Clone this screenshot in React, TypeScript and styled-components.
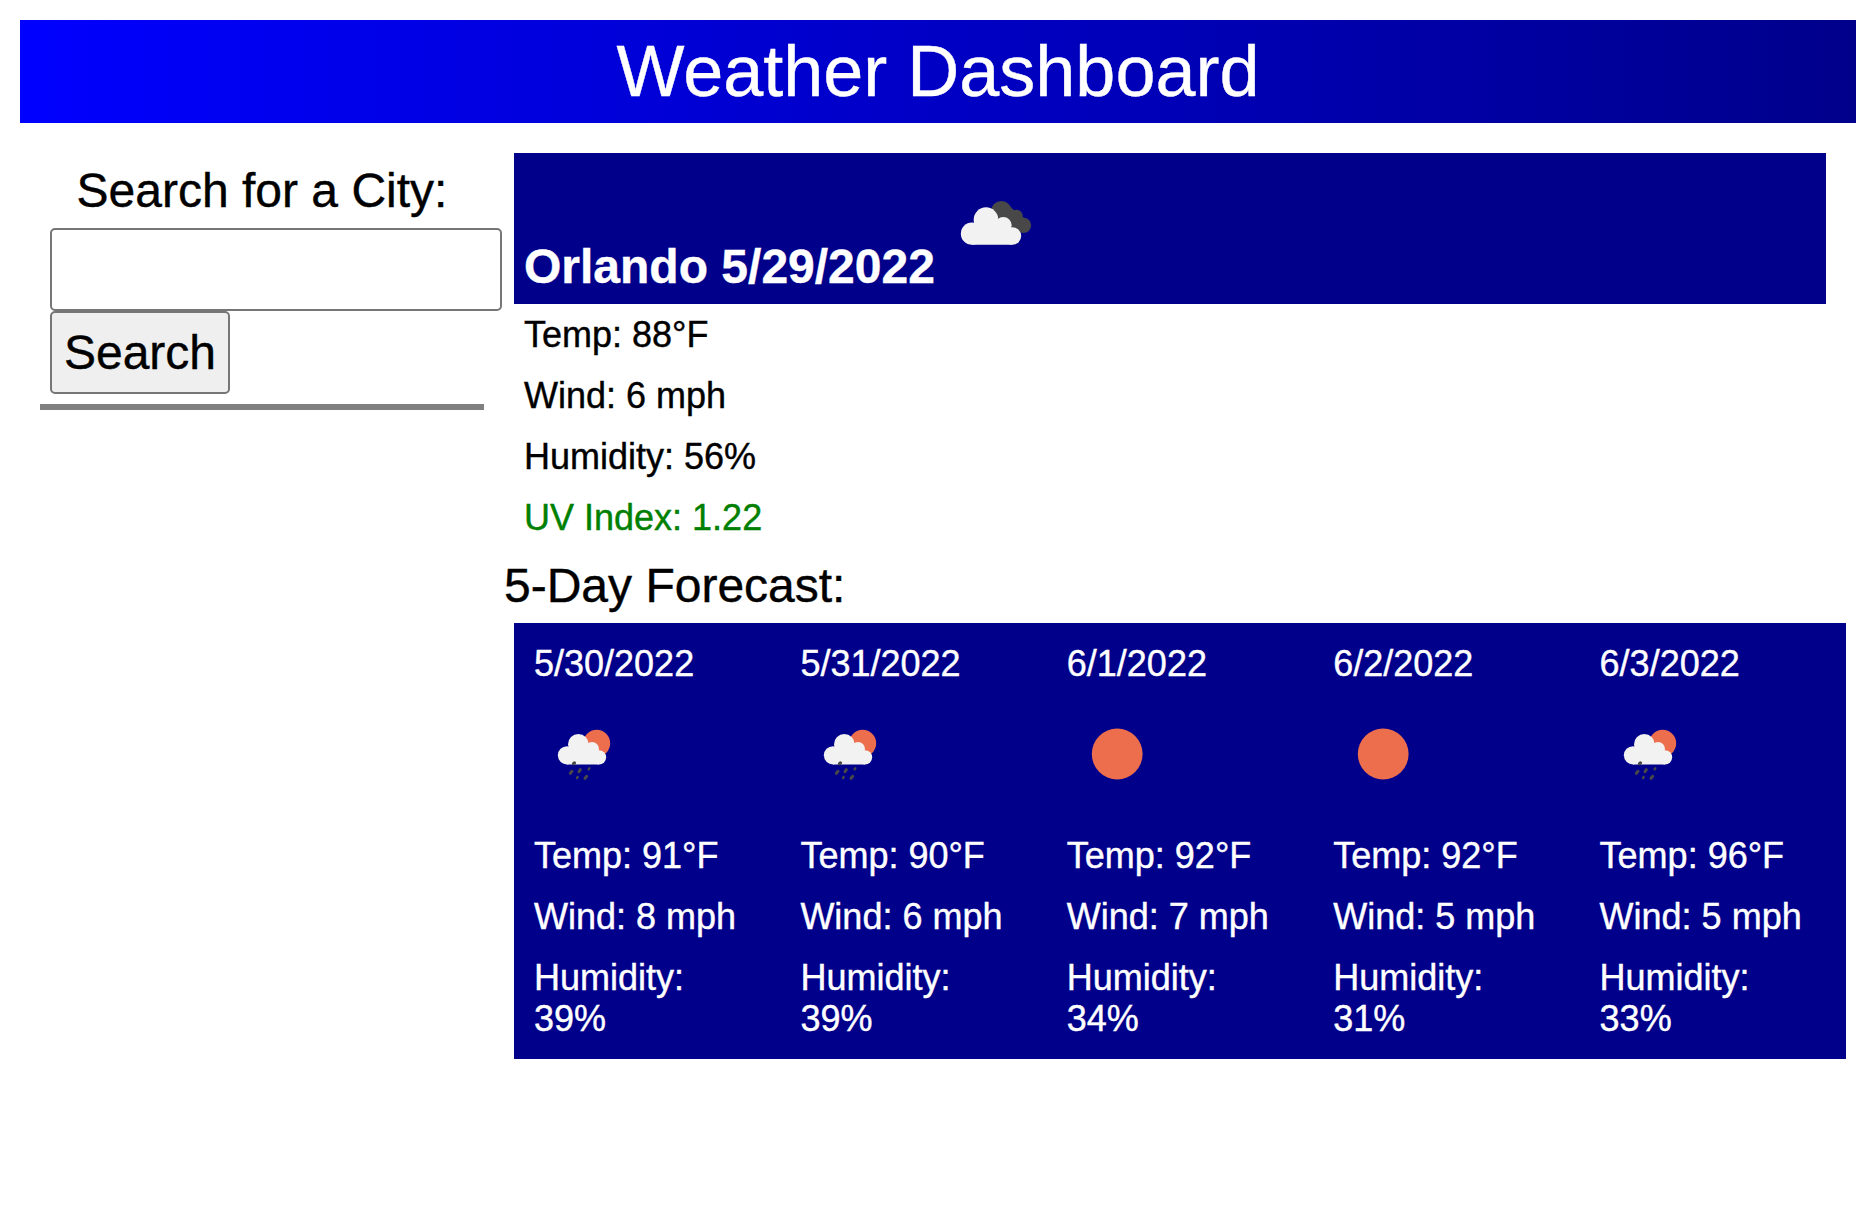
import React from 'react';
import styled, { createGlobalStyle } from 'styled-components';

const GlobalStyle = createGlobalStyle`
  * { box-sizing: border-box; margin: 0; padding: 0; }
  body {
    background: #fff;
    color: #000;
    font-family: Helvetica, "Liberation Sans", Arial, sans-serif;
    font-size: 36px;
    line-height: 41px;
    -webkit-text-stroke: 0.4px currentColor;
  }
`;

const Page = styled.div`
  padding: 20px;
`;

const Header = styled.header`
  height: 103px;
  padding-top: 10px;
  background: linear-gradient(90deg, blue, darkblue);
  color: #fff;
  font-size: 72px;
  line-height: 83px;
  text-align: center;
`;

const Main = styled.main`
  display: flex;
  align-items: flex-start;
  padding-top: 30px;
`;

const Sidebar = styled.aside`
  flex: none;
  width: 484px;
  padding: 10px 20px 0;
`;

const SidebarTitle = styled.h2`
  font-size: 48px;
  font-weight: 400;
  line-height: 55px;
  text-align: center;
`;

const SearchForm = styled.form`
  display: flex;
  flex-direction: column;
  align-items: flex-start;
  margin-top: 10px;
  padding: 0 0 10px 10px;
  border-bottom: 6px solid gray;
`;

const CityInput = styled.input`
  flex: none;
  width: 452px;
  height: 83px;
  border: 2px solid #767676;
  border-radius: 5px;
  background: #fff;
  font: 48px Helvetica, "Liberation Sans", Arial, sans-serif;
`;

const SearchButton = styled.button`
  width: 180px;
  height: 83px;
  border: 2px solid #767676;
  border-radius: 5px;
  background: #efefef;
  color: #000;
  font: 48px Helvetica, "Liberation Sans", Arial, sans-serif;
`;

const Content = styled.section`
  flex: 1;
`;

const CurrentHeading = styled.h2`
  display: flex;
  align-items: baseline;
  gap: 13px;
  height: 151px;
  margin: 0 30px 0 10px;
  padding: 30px 10px 0;
  background: darkblue;
  color: #fff;
  font-size: 48px;
  font-weight: 700;
  line-height: 55px;
`;

const Stats = styled.ul`
  display: grid;
  gap: 20px;
  padding: 10px 20px;
  list-style: none;
`;

const Stat = styled.li<{ $color?: string }>`
  color: ${({ $color }) => $color ?? 'inherit'};
`;

const ForecastTitle = styled.h3`
  margin: 10px 0;
  font-size: 48px;
  font-weight: 400;
  line-height: 55px;
`;

const Forecast = styled.div`
  display: grid;
  grid-template-columns: repeat(5, 1fr);
  margin: 0 10px;
  background: darkblue;
  color: #fff;
`;

const Day = styled.article`
  display: flex;
  flex-direction: column;
  gap: 20px;
  padding: 20px;
`;

const IconSlot = styled.div`
  height: 111px;
`;

const Icon = styled.svg`
  display: block;
  flex: none;
  width: 100px;
  height: 100px;
`;

const BrokenClouds = () => (
  <Icon viewBox="24 9 300 300">
    <g fill="#484848">
      <circle cx="184" cy="94" r="31" />
      <circle cx="229" cy="108" r="19" />
      <circle cx="251" cy="136" r="22.5" />
      <path d="M160 110 L205 74 L232 100 L262 120 L251 158 L215 150Z" />
    </g>
    <g fill="#f2f2f2">
      <circle cx="96" cy="161" r="33.5" />
      <circle cx="138" cy="119" r="37" />
      <circle cx="190" cy="136" r="25" />
      <circle cx="217" cy="168" r="26.5" />
      <path d="M96 194.5 V140 L140 115 L190 130 L217 145 V194.5Z" />
    </g>
  </Icon>
);

const SunShower = () => (
  <Icon viewBox="-18 -18 300 300">
    <circle cx="170" cy="100" r="40.5" fill="#ec6e4c" />
    <g fill="#f2f2f2">
      <circle cx="81" cy="136" r="27.5" />
      <circle cx="115" cy="103" r="31" />
      <circle cx="156" cy="117" r="21" />
      <circle cx="177" cy="142" r="21.5" />
      <path d="M81 163.5 V118 L115 105 L155 110 L177 125 V163.5Z" />
    </g>
    <g stroke="#484848" strokeWidth="9" strokeLinecap="round">
      <path d="M101 161 L103 159" strokeWidth="10" />
      <path d="M91 190 L96 184" />
      <path d="M117 185 L121 179" />
      <path d="M146 178 L148 175" strokeWidth="7" />
      <path d="M111 204 L113 201" strokeWidth="7" />
      <path d="M135 205 L140 199" />
    </g>
  </Icon>
);

const ClearSky = () => (
  <Icon viewBox="0 0 100 100">
    <circle cx="50.2" cy="50" r="25.4" fill="#ec6e4c" />
  </Icon>
);

const days = [
  { date: '5/30/2022', icon: SunShower, temp: 91, wind: 8, humidity: 39 },
  { date: '5/31/2022', icon: SunShower, temp: 90, wind: 6, humidity: 39 },
  { date: '6/1/2022', icon: ClearSky, temp: 92, wind: 7, humidity: 34 },
  { date: '6/2/2022', icon: ClearSky, temp: 92, wind: 5, humidity: 31 },
  { date: '6/3/2022', icon: SunShower, temp: 96, wind: 5, humidity: 33 },
];

export default function App() {
  return (
    <Page>
      <GlobalStyle />
      <Header>Weather Dashboard</Header>
      <Main>
        <Sidebar>
          <SidebarTitle>Search for a City:</SidebarTitle>
          <SearchForm onSubmit={(e) => e.preventDefault()}>
            <CityInput type="text" />
            <SearchButton type="submit">Search</SearchButton>
          </SearchForm>
        </Sidebar>
        <Content>
          <CurrentHeading>
            <span>Orlando 5/29/2022</span>
            <BrokenClouds />
          </CurrentHeading>
          <Stats>
            <Stat>Temp: 88°F</Stat>
            <Stat>Wind: 6 mph</Stat>
            <Stat>Humidity: 56%</Stat>
            <Stat $color="green">UV Index: 1.22</Stat>
          </Stats>
          <ForecastTitle>5-Day Forecast:</ForecastTitle>
          <Forecast>
            {days.map(({ date, icon: DayIcon, temp, wind, humidity }) => (
              <Day key={date}>
                <p>{date}</p>
                <IconSlot>
                  <DayIcon />
                </IconSlot>
                <p>{`Temp: ${temp}°F`}</p>
                <p>{`Wind: ${wind} mph`}</p>
                <p>{`Humidity: ${humidity}%`}</p>
              </Day>
            ))}
          </Forecast>
        </Content>
      </Main>
    </Page>
  );
}
